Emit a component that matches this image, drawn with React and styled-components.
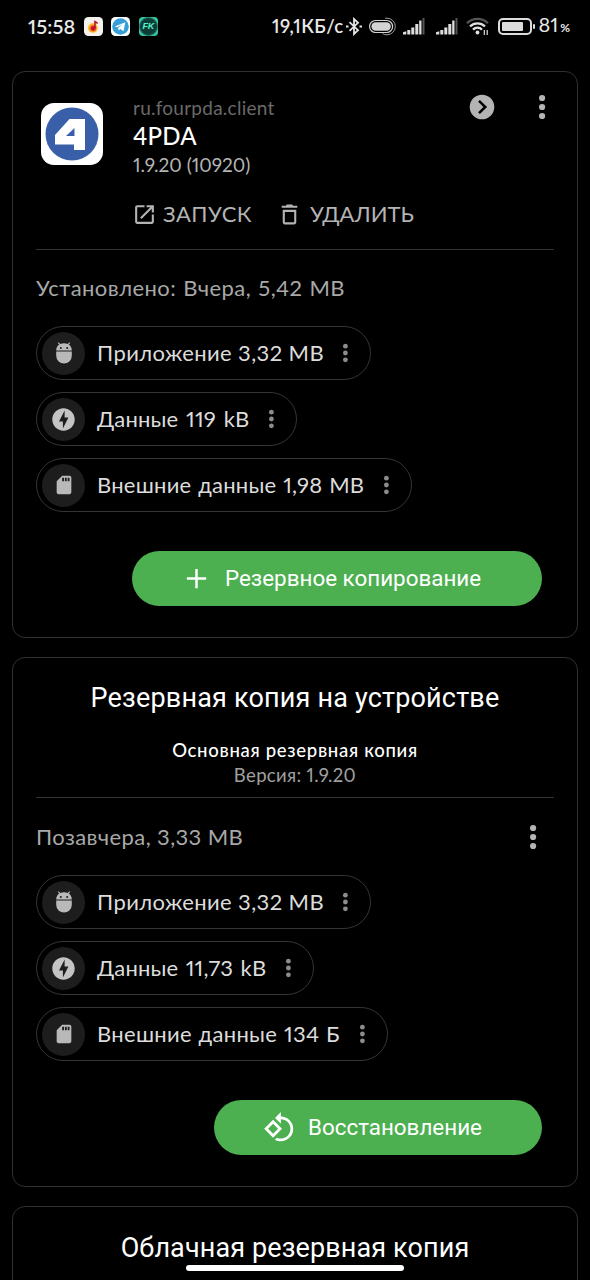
import React from "react";
import styled, { createGlobalStyle } from "styled-components";

const Global = createGlobalStyle`
  *, *::before, *::after { box-sizing: border-box; }
  html, body { margin: 0; background: #000; }
  body { overflow: hidden; font-family: Lato, "Noto Sans", sans-serif; }
  svg { display: block; flex: none; }
`;

const Screen = styled.main`
  position: relative;
  width: 590px;
  height: 1280px;
  overflow: hidden;
  background: #000;
  color: #fff;
  display: flex;
  flex-direction: column;
`;

const StatusBar = styled.header`
  flex: none;
  height: 71px;
  padding: 14px 20px 0 28px;
  display: flex;
  align-items: flex-start;
  justify-content: space-between;
`;

const StatusGroup = styled.div`
  height: 24px;
  display: flex;
  align-items: center;
  gap: ${(p) => p.$gap}px;
`;

const Label = styled.span`
  display: block;
  white-space: nowrap;
  font-family: ${(p) => (p.$roboto ? "Roboto, sans-serif" : 'Lato, "Noto Sans", sans-serif')};
  font-size: ${(p) => p.$size}px;
  line-height: ${(p) => p.$line || p.$size + 4}px;
  font-weight: ${(p) => p.$weight || 400};
  font-variant-numeric: proportional-nums;
  letter-spacing: ${(p) => p.$track || 0}px;
  word-spacing: ${(p) => p.$word || 0}px;
  color: ${(p) => p.$color || "#fff"};

  small {
    font-size: 12px;
    font-weight: 700;
    margin-left: 2px;
  }
`;

const Cards = styled.div`
  display: flex;
  flex-direction: column;
  gap: 19px;
  padding: 0 12px;
`;

const Card = styled.section`
  flex: none;
  height: ${(p) => p.$height}px;
  border: 1px solid #303030;
  border-radius: 13px;
  padding: 0 23px;
  display: flex;
  flex-direction: column;
`;

const AppHeader = styled.div`
  height: 178px;
  flex: none;
  border-bottom: 1px solid #333;
  display: flex;
  padding: 23px 0 0 5px;
`;

const LogoSlot = styled.div`
  padding-top: 8px;
`;

const AppInfo = styled.div`
  flex: 1;
  margin-left: 30px;
`;

const HeaderActions = styled.div`
  display: flex;
  gap: 37px;
  margin-right: 2px;
  margin-top: -1px;
`;

const AppActions = styled.div`
  display: flex;
  gap: 25px;
  margin: 23px 0 0 -1px;
`;

const TextButton = styled.button`
  border: 0;
  padding: 0;
  background: none;
  display: flex;
  align-items: center;
  gap: ${(p) => p.$gap}px;
  height: 28px;
`;

const Summary = styled.div`
  flex: none;
  height: ${(p) => p.$height}px;
  display: flex;
  align-items: center;
  justify-content: space-between;
  padding-right: 11px;
`;

const Chips = styled.div`
  display: flex;
  flex-direction: column;
  align-items: flex-start;
  gap: 12px;
`;

const ChipBox = styled.div`
  height: 54px;
  width: ${(p) => p.$width}px;
  border: 1px solid #353535;
  border-radius: 27px;
  padding: 0 15px 0 5px;
  display: flex;
  align-items: center;
  justify-content: space-between;
`;

const ChipMain = styled.div`
  display: flex;
  align-items: center;
  gap: 12px;
`;

const ChipIcon = styled.div`
  width: 43px;
  height: 43px;
  flex: none;
  border-radius: 50%;
  background: #1d1d1d;
  display: flex;
  align-items: center;
  justify-content: center;
`;

const GreenButton = styled.button`
  width: ${(p) => p.$width}px;
  height: 55px;
  margin: 39px 12px 0 auto;
  flex: none;
  border: 0;
  border-radius: 28px;
  background: #4caf50;
  display: flex;
  align-items: center;
  padding: 0 0 1px ${(p) => p.$inset}px;
  gap: 12px;
`;

const BackupHeader = styled.div`
  flex: none;
  height: 140px;
  border-bottom: 1px solid #333;
  padding-top: 23px;
  display: flex;
  flex-direction: column;
  align-items: center;
`;

const SubTitle = styled.div`
  margin-top: 23px;
  display: flex;
  flex-direction: column;
  align-items: center;
`;

const CloudTitle = styled.div`
  padding-top: 24px;
  display: flex;
  justify-content: center;
`;

const HomeIndicator = styled.div`
  position: absolute;
  left: 186px;
  bottom: 9px;
  width: 218px;
  height: 6px;
  border-radius: 3px;
  background: #fff;
`;

const KernelBadge = styled.div`
  width: 19px;
  height: 19px;
  border-radius: 4px;
  background: radial-gradient(circle, #0d3c37 50%, #12443d 60%, #35c9a6 74%);
  color: #58f3d0;
  font: italic 900 9px/19px "Liberation Sans", sans-serif;
  letter-spacing: -0.3px;
  text-align: center;
`;

const Glyph = ({ d, size, color = "#b4b4b4" }) => (
  <svg width={size} height={size} viewBox="0 0 24 24" fill={color}>
    <path d={d} />
  </svg>
);

const LAUNCH =
  "M19 19H5V5h7V3H5a2 2 0 0 0-2 2v14c0 1.1.89 2 2 2h14c1.1 0 2-.9 2-2v-7h-2v7zM14 3v2h3.59l-9.83 9.83 1.41 1.41L19 6.41V10h2V3h-7z";
const TRASH =
  "M5.500 19.500c0 1.100.900 2 2 2h9c1.100 0 2-.900 2-2V7.500h-13zM7.500 9.500h9v10h-9zM15.500 3.500l-1-1h-5l-1 1H4.500v2h15v-2z";
const BOLT =
  "M12 2.02c-5.51 0-9.98 4.47-9.98 9.98s4.47 9.98 9.98 9.98 9.98-4.47 9.98-9.98S17.51 2.02 12 2.02zM11.48 20v-6.26H8L13 4v6.26h3.35L11.48 20z";
const SD =
  "M18 2h-8L4.02 8 4 20c0 1.1.9 2 2 2h12c1.1 0 2-.9 2-2V4c0-1.1-.9-2-2-2zm-6 6h-2V4h2v4zm3 0h-2V4h2v4zm3 0h-2V4h2v4z";
const ROTATE =
  "M7.34 6.41L.86 12.9l6.49 6.48 6.49-6.48-6.5-6.49zM3.69 12.9l3.66-3.66L11 12.9l-3.66 3.66-3.65-3.66zm15.67-6.26C17.61 4.88 15.3 4 13 4V.76L8.76 5 13 9.24V6c1.79 0 3.58.68 4.95 2.05 2.73 2.73 2.73 7.17 0 9.9C16.58 19.32 14.79 20 13 20c-.97 0-1.94-.21-2.84-.61l-1.49 1.49C10.02 21.62 11.51 22 13 22c2.3 0 4.61-.88 6.36-2.64 3.52-3.51 3.52-9.21 0-12.72z";
const PLUS = "M19 12.9h-6.1V19h-1.8v-6.1H5v-1.8h6.1V5h1.8v6.1H19z";

const Robot = () => (
  <svg width="16" height="22" viewBox="0 0 16 22" fill="#b9b9b9">
    <path d="M.2 9.6h15.6v4.2a7.8 7.8 0 0 1-15.6 0z" />
    <path
      fillRule="evenodd"
      d="M.2 8.4C.2 5.7 1.4 3.7 3.3 2.5L1.8.9l.7-.7 1.9 1.8a8.6 8.6 0 0 1 7.2 0L13.5.2l.7.7-1.5 1.6c1.9 1.2 3.1 3.2 3.1 5.9zM4.8 5.1a1 1 0 1 0 0 2 1 1 0 0 0 0-2zm6.4 0a1 1 0 1 0 0 2 1 1 0 0 0 0-2z"
    />
  </svg>
);

const Dots = ({ h, r, gap, color }) => (
  <svg width={r * 2 + 14} height={h} viewBox={`${-r - 7} ${-h / 2} ${r * 2 + 14} ${h}`} fill={color}>
    <circle cy={-gap} r={r} />
    <circle r={r} />
    <circle cy={gap} r={r} />
  </svg>
);

const BigDots = () => <Dots h={26} r={3.1} gap={9} color="#b4b4b4" />;
const SmallDots = () => <Dots h={20} r={2.4} gap={6.8} color="#8c8c8c" />;

const ArrowCircle = () => (
  <svg width="26" height="26" viewBox="0 0 26 26">
    <circle cx="13" cy="13" r="12.3" fill="#b4b4b4" />
    <path d="M10 6.8l6.3 6.2-6.3 6.2" fill="none" stroke="#000" strokeWidth="2.5" />
  </svg>
);

const AppLogo = () => (
  <svg width="62" height="62" viewBox="0 0 62 62">
    <rect width="62" height="62" rx="13" fill="#fff" />
    <circle cx="31" cy="31" r="26.5" fill="#395fa9" />
    <path
      fillRule="evenodd"
      fill="#fff"
      d="M28.5 16H44v31H33v-5.500H14v-9.500zM33.500 25l-8.500 8h8.500z"
    />
  </svg>
);

const Music = () => (
  <svg width="19" height="19" viewBox="0 0 19 19">
    <rect width="19" height="19" rx="4.5" fill="#f4f1ee" />
    <circle cx="8.8" cy="11" r="5" fill="#fbc93a" />
    <circle cx="9" cy="11.2" r="3.6" fill="#f47a2a" />
    <circle cx="9.2" cy="11.3" r="2.4" fill="#c8102a" />
    <path d="M10.200 11V3.200l3.500 2v1.800l-2-.8V11z" fill="#b3122a" />
  </svg>
);

const Telegram = () => (
  <svg width="19" height="19" viewBox="0 0 19 19">
    <rect width="19" height="19" rx="4.5" fill="#fff" />
    <circle cx="9.5" cy="9.5" r="8.3" fill="#359fd6" />
    <path d="M3.800 9.400l10.500-4.200-1.800 9-3.200-2.300-1.600 1.500-.5-2.700 4.500-3.700-5.500 3.300z" fill="#fff" />
  </svg>
);

const Bluetooth = () => (
  <svg width="16" height="19" viewBox="0 0 16 19" fill="none" stroke="#e4e4e4" strokeWidth="1.8">
    <path d="M3.500 5.200l8.500 8-4 3.800V2l4 3.800-8.500 8" />
    <path d="M0 9.500h2.500M13.500 9.500H16" strokeWidth="2" />
  </svg>
);

const Capsule = () => (
  <svg width="27" height="19" viewBox="0 0 27 19" fill="none" stroke="#d4d4d4">
    <rect x=".6" y="3.5" width="23" height="12" rx="6" strokeWidth="1.2" />
    <rect x="2.4" y="5.3" width="19.4" height="8.4" rx="4.2" fill="#d4d4d4" stroke="none" />
    <path d="M16 1.200h2a8.300 8.300 0 0 1 0 16.600q-3 0-4.500-1.300" strokeWidth="1" stroke="#999" />
  </svg>
);

const Signal = () => (
  <svg width="22" height="17" viewBox="0 0 22 17" fill="#dedede">
    <path d="M0 16.500v-2.300l3.300-1v3.300zM4.300 12h3v4.500h-3zM8.300 9.500h3v7h-3zM12.300 6h3v10.500h-3z" />
    <path d="M16.200 2.500h2.300v14h-2.300z" />
    <path d="M19.500 0h2v16.500h-2z" fill="#555" />
  </svg>
);

const Wifi = () => (
  <svg width="23" height="19" viewBox="0 0 23 19" fill="none" stroke="#e0e0e0" strokeWidth="2.300">
    <path d="M1 6.200a15 15 0 0 1 21 0" stroke="#555" />
    <path d="M4 9.400a10.700 10.700 0 0 1 15 0M7 12.600a6.300 6.300 0 0 1 9 0" />
    <circle cx="11.5" cy="15.5" r="1.900" fill="#e0e0e0" stroke="none" />
    <path d="M18.300 18v-5M21.200 13v5" strokeWidth="1.2" />
  </svg>
);

const Battery = () => (
  <svg width="37" height="17" viewBox="0 0 37 17">
    <rect x="1" y="1" width="32" height="15" rx="4" fill="none" stroke="#dcdcdc" strokeWidth="2" />
    <rect x="4" y="4" width="21" height="9" rx="1" fill="#dcdcdc" />
    <rect x="35" y="6" width="2" height="5" rx="1" fill="#dcdcdc" />
  </svg>
);

const chipIcons = {
  app: <Robot />,
  data: <Glyph d={BOLT} size={27} color="#c4c4c4" />,
  ext: <Glyph d={SD} size={22} color="#b9b9b9" />,
};

const Chip = ({ icon, width, track, word, children }) => (
  <ChipBox $width={width}>
    <ChipMain>
      <ChipIcon>{chipIcons[icon]}</ChipIcon>
      <Label $size={22} $line={28} $color="#dcdcdc" $track={track} $word={word}>{children}</Label>
    </ChipMain>
    <SmallDots />
  </ChipBox>
);

export default function App() {
  return (
    <Screen>
      <Global />
      <StatusBar>
        <StatusGroup $gap={8.5}>
          <Label $size={20} $weight={600} $color="#e8e8e8" $track={0.1}>15:58</Label>
          <Music />
          <Telegram />
          <KernelBadge>FK</KernelBadge>
        </StatusGroup>
        <StatusGroup $gap={3}>
          <Label $size={18.5} $weight={600} $color="#e8e8e8" $track={0.4}>19,1КБ/с</Label>
          <StatusGroup $gap={7}>
            <Bluetooth />
            <Capsule />
            <Signal />
          </StatusGroup>
          <StatusGroup $gap={9}>
            <StatusGroup $gap={8}>
              <span />
              <Signal />
              <Wifi />
            </StatusGroup>
            <Battery />
          </StatusGroup>
          <Label $size={20} $color="#e8e8e8">81<small>%</small></Label>
        </StatusGroup>
      </StatusBar>
      <Cards>
        <Card $height={567}>
          <AppHeader>
            <LogoSlot><AppLogo /></LogoSlot>
            <AppInfo>
              <Label $size={19} $line={25} $color="#6a6a6a" $track={0.25}>ru.fourpda.client</Label>
              <Label $size={24} $line={32} $weight={500} $track={0.2}>4PDA</Label>
              <Label $size={19} $line={25} $color="#b4b4b4">1.9.20 (10920)</Label>
              <AppActions>
                <TextButton $gap={6}>
                  <Glyph d={LAUNCH} size={25} />
                  <Label $size={22} $line={28} $color="#b4b4b4" $track={0.45}>ЗАПУСК</Label>
                </TextButton>
                <TextButton $gap={8}>
                  <Glyph d={TRASH} size={25} />
                  <Label $size={22} $line={28} $color="#b4b4b4">УДАЛИТЬ</Label>
                </TextButton>
              </AppActions>
            </AppInfo>
            <HeaderActions>
              <ArrowCircle />
              <BigDots />
            </HeaderActions>
          </AppHeader>
          <Summary $height={76}>
            <Label $size={22} $line={28} $color="#a8a8a8" $track={0.45} $word={1}>Установлено: Вчера, 5,42 MB</Label>
          </Summary>
          <Chips>
            <Chip icon="app" width={335} track={0.4}>Приложение 3,32 MB</Chip>
            <Chip icon="data" width={261} track={0.15} word={2}>Данные 119 kB</Chip>
            <Chip icon="ext" width={376} track={0.25} word={0.8}>Внешние данные 1,98 MB</Chip>
          </Chips>
          <GreenButton $width={410} $inset={48}>
            <Glyph d={PLUS} size={33} color="#fff" />
            <Label $roboto $size={22.4} $line={28}>Резервное копирование</Label>
          </GreenButton>
        </Card>
        <Card $height={530}>
          <BackupHeader>
            <Label $roboto $size={27} $line={34} $track={0.18}>Резервная копия на устройстве</Label>
            <SubTitle>
              <Label $size={18.5} $line={25} $weight={500} $track={0.7}>Основная резервная копия</Label>
              <Label $size={18.5} $line={24} $color="#a0a0a0" $track={0.35}>Версия: 1.9.20</Label>
            </SubTitle>
          </BackupHeader>
          <Summary $height={77}>
            <Label $size={22} $line={28} $color="#a8a8a8" $track={0.4}>Позавчера, 3,33 MB</Label>
            <BigDots />
          </Summary>
          <Chips>
            <Chip icon="app" width={335} track={0.4}>Приложение 3,32 MB</Chip>
            <Chip icon="data" width={278} track={0.15} word={1.6}>Данные 11,73 kB</Chip>
            <Chip icon="ext" width={352} track={0.3} word={0.8}>Внешние данные 134 Б</Chip>
          </Chips>
          <GreenButton $width={328} $inset={49}>
            <Glyph d={ROTATE} size={33} color="#fff" />
            <Label $roboto $size={22.4} $line={28}>Восстановление</Label>
          </GreenButton>
        </Card>
        <Card $height={140}>
          <CloudTitle>
            <Label $roboto $size={27} $line={34} $track={0.12}>Облачная резервная копия</Label>
          </CloudTitle>
        </Card>
      </Cards>
      <HomeIndicator />
    </Screen>
  );
}
